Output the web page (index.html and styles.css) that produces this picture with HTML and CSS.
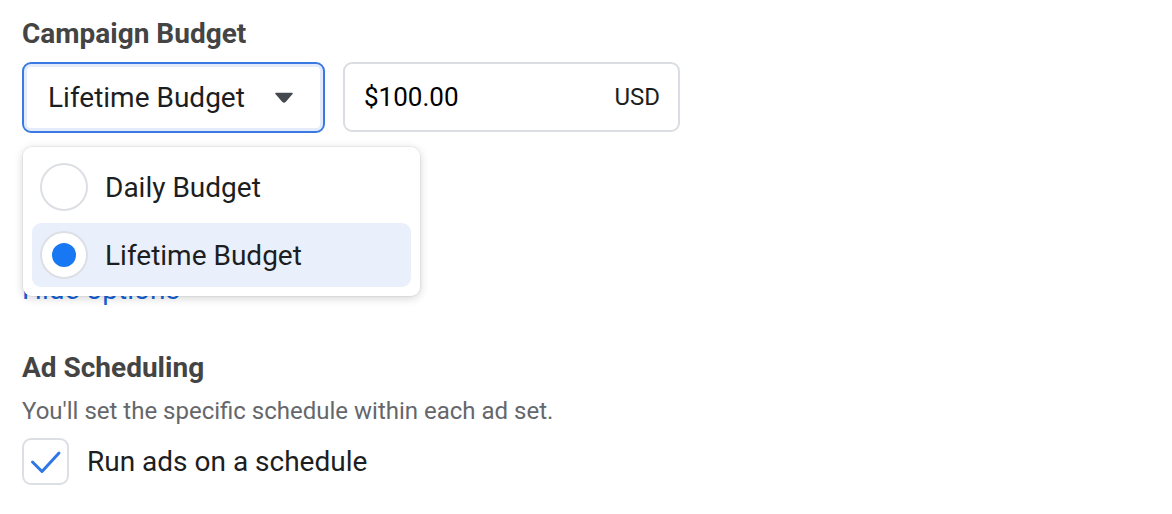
FILE: index.html
```html
<!DOCTYPE html>
<html lang="en">
<head>
<meta charset="utf-8">
<title>Campaign Budget</title>
<link rel="stylesheet" href="styles.css">
</head>
<body>
<main class="page">
  <section class="budget">
    <h2 class="title">Campaign Budget</h2>
    <div class="controls">
      <div class="select">
        <span class="select-label">Lifetime Budget</span>
        <svg class="caret" width="18" height="11" viewBox="0 0 18 11"><path d="M1 1.5 H17 L10.3 9.3 Q9 10.6 7.7 9.3 Z" fill="#444950" stroke="#444950" stroke-width="1.5" stroke-linejoin="round"/></svg>
      </div>
      <div class="amount">
        <span class="amount-value">$100.00</span>
        <span class="currency">USD</span>
      </div>
    </div>
    <div class="options-area">
      <a class="link" href="#">Hide options</a>
      <div class="menu">
        <div class="option">
          <span class="radio"></span>
          <span class="option-label">Daily Budget</span>
        </div>
        <div class="option option-selected">
          <span class="radio radio-on"><span class="dot"></span></span>
          <span class="option-label">Lifetime Budget</span>
        </div>
      </div>
    </div>
  </section>
  <section class="schedule">
    <h2 class="title">Ad Scheduling</h2>
    <p class="desc">You'll set the specific schedule within each ad set.</p>
    <label class="check-row">
      <span class="checkbox">
        <svg width="43" height="43" viewBox="0 0 43 43"><path d="M8.5 22 L18 31.5 L35 13" fill="none" stroke="#2f76e6" stroke-width="3" stroke-linecap="round" stroke-linejoin="round"/></svg>
      </span>
      <span class="check-label">Run ads on a schedule</span>
    </label>
  </section>
</main>
</body>
</html>
```

FILE: styles.css
```css
* { box-sizing: border-box; }
html, body { margin: 0; padding: 0; background: #ffffff; }
body { font-family: Roboto, "Liberation Sans", Arial, sans-serif; color: #1c1e21; }
.page { padding: 18px 22px 0; }
.title {
  margin: 0;
  font-size: 28px;
  line-height: 32px;
  font-weight: 700;
  color: #444444;
}
.controls {
  display: flex;
  gap: 18px;
  margin-top: 12px;
}
.select {
  width: 303px;
  height: 71px;
  border: 2px solid #3a7ae2;
  border-radius: 9px;
  box-shadow: inset 0 0 0 3px #e4ecfb;
  display: flex;
  align-items: center;
  justify-content: space-between;
  padding: 0 30px 0 24px;
}
.select-label { font-size: 28px; color: #1c1e21; }
.caret { display: block; }
.amount {
  width: 337px;
  height: 70px;
  border: 2px solid #dadde1;
  border-radius: 9px;
  display: flex;
  align-items: center;
  justify-content: space-between;
  padding: 0 18px 0 19px;
}
.amount-value { font-size: 26px; color: #000000; }
.currency { font-size: 24px; color: #1c1e21; }
.options-area {
  position: relative;
  height: 219px;
}
.link {
  position: absolute;
  left: 0;
  top: 141px;
  font-size: 28px;
  line-height: 32px;
  color: #1664d9;
  text-decoration: none;
}
.menu {
  position: absolute;
  left: 1px;
  top: 14px;
  width: 397px;
  background: #ffffff;
  border-radius: 9px;
  box-shadow: 0 2px 10px rgba(0, 0, 0, 0.18), 0 0 0 1px rgba(0, 0, 0, 0.04);
  padding: 8px 9px 9px;
  display: flex;
  flex-direction: column;
  gap: 4px;
}
.option {
  height: 64px;
  border-radius: 9px;
  display: flex;
  align-items: center;
  gap: 17px;
  padding-left: 8px;
}
.option-selected { background: #e9f0fc; }
.radio {
  width: 48px;
  height: 48px;
  border-radius: 50%;
  border: 2px solid #dcdfe3;
  background: #ffffff;
  display: flex;
  align-items: center;
  justify-content: center;
  flex: none;
}
.dot {
  width: 24px;
  height: 24px;
  border-radius: 50%;
  background: #1877f2;
}
.option-label { font-size: 28px; color: #1c1e21; }
.desc {
  margin: 13px 0 0;
  font-size: 24px;
  line-height: 28px;
  color: #65676b;
}
.check-row {
  display: flex;
  align-items: center;
  gap: 18px;
  margin-top: 13px;
}
.checkbox {
  width: 47px;
  height: 47px;
  border: 2px solid #dcdfe3;
  border-radius: 9px;
  display: flex;
  align-items: center;
  justify-content: center;
  flex: none;
}
.checkbox svg { display: block; }
.check-label { font-size: 28px; color: #1c1e21; }
```
